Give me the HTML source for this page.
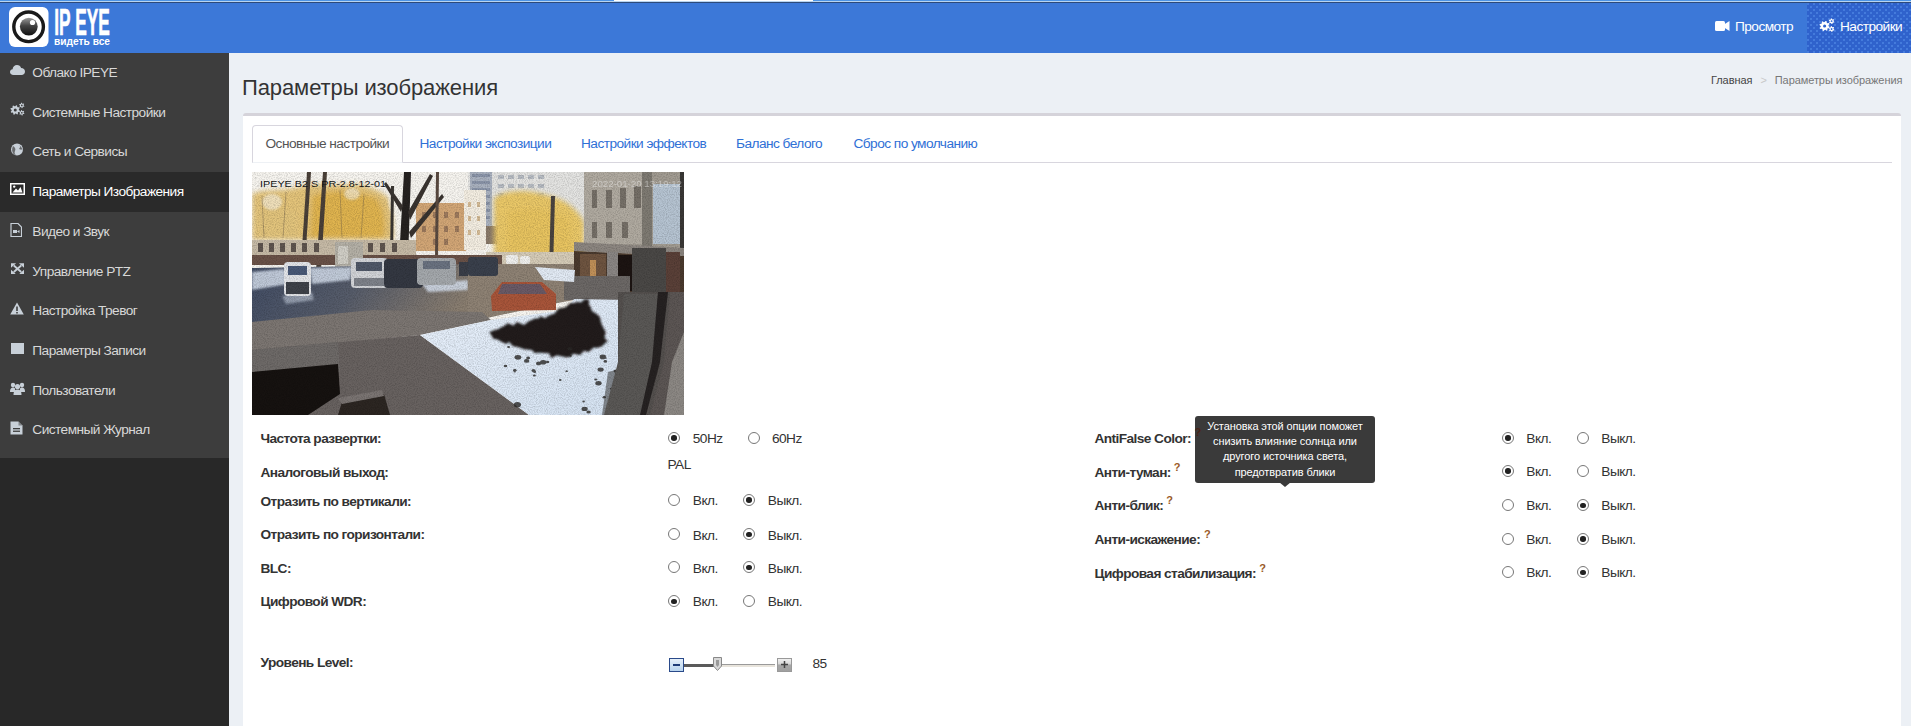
<!DOCTYPE html>
<html><head><meta charset="utf-8">
<style>
*{box-sizing:border-box;margin:0;padding:0}
html,body{width:1911px;height:726px;overflow:hidden}
body{position:relative;background:#ecf0f5;font-family:"Liberation Sans",sans-serif;font-size:13px;color:#333}
.abs{position:absolute}
#strip0{left:0;top:0;width:1911px;height:1px;background:#4d94e6}
#strip0w{left:614px;top:0;width:199px;height:1px;background:#fff}
#strip1{left:0;top:1px;width:1911px;height:1px;background:#b8d4f0}
#strip2{left:0;top:2px;width:1911px;height:1px;background:#2d4a7a}
#header{left:0;top:3px;width:1911px;height:50px;background:#3c78d8}
#navact{left:1807px;top:3px;width:104px;height:50px;background-color:#2f62cc;background-image:radial-gradient(circle at 1px 1px,rgba(100,160,245,0.4) 0.7px,transparent 1.1px),radial-gradient(circle at 4px 4px,rgba(100,160,245,0.4) 0.7px,transparent 1.1px);background-size:6px 6px}
.hnav{color:#fff;font-size:13.7px;letter-spacing:-0.55px;white-space:nowrap}
#sidebar{left:0;top:53px;width:229px;height:673px;background:#282828}
#menu{left:0;top:53px;width:229px;height:405px;background:#3d3d3d}
.mi{position:absolute;left:0;width:229px;height:39.7px}
.mi.act{background:#2a2a2a}
.mi .t{position:absolute;left:32.3px;top:10px;line-height:20px;color:#d8d8d8;font-size:13.7px;letter-spacing:-0.55px;white-space:nowrap}
.mi.act .t{color:#fff}
.mi svg{position:absolute;left:10px;top:11px}
#title{left:242px;top:74px;font-size:22px;line-height:28px;color:#333;white-space:nowrap;letter-spacing:-0.1px}
#bc{left:1711px;top:73px;font-size:11px;line-height:14px;white-space:nowrap;color:#777;letter-spacing:-0.07px}
#panel{left:243px;top:113px;width:1658px;height:613px;background:#fff;border-top:3px solid #d5d3da;border-radius:3px 3px 0 0}
#tabline{left:252px;top:162px;width:1640px;height:1px;background:#d8d6de}
#tab1{left:252px;top:125px;width:151px;height:38px;border:1px solid #d8d6de;border-bottom:1px solid #eef1f5;border-radius:4px 4px 0 0;background:#fff}
.tab{position:absolute;top:135px;line-height:18px;font-size:13.7px;color:#2f70d6;white-space:nowrap;letter-spacing:-0.55px}
.lbl{position:absolute;font-weight:bold;font-size:13.7px;color:#333;white-space:nowrap;letter-spacing:-0.58px;line-height:16px}
.txt{position:absolute;font-size:13.7px;color:#333;white-space:nowrap;letter-spacing:-0.55px;line-height:16px}
.rad{position:absolute;width:12px;height:12px;border-radius:50%;border:1px solid #777;background:#fff}
.rad.on::after{content:"";position:absolute;left:2.25px;top:2.25px;width:5.5px;height:5.5px;border-radius:50%;background:#222}
.q{position:absolute;font-size:11px;font-weight:bold;color:#9a5a28;line-height:11px}
#tip{left:1195px;top:416px;width:180px;height:67px;background:#3a3a3a;border-radius:3px;color:#fff;font-size:11px;line-height:15.2px;text-align:center;padding-top:3px;letter-spacing:-0.1px}
#tiparrow{left:1279px;top:482px;width:0;height:0;border-left:6px solid transparent;border-right:6px solid transparent;border-top:5px solid #3a3a3a}
</style></head><body>
<div class="abs" id="strip0"></div><div class="abs" id="strip0w"></div><div class="abs" id="strip1"></div><div class="abs" id="strip2"></div>
<div class="abs" id="header"></div>
<div class="abs" id="navact"></div>
<!-- logo -->
<svg class="abs" style="left:0;top:0" width="120" height="53" viewBox="0 0 120 53">
  <rect x="9" y="7" width="39.5" height="40" rx="6" fill="#fff"/>
  <circle cx="28.6" cy="26.8" r="14.8" fill="none" stroke="#1a1a1a" stroke-width="3.4"/>
  <defs><linearGradient id="pg" x1="0" y1="0" x2="0" y2="1"><stop offset="0" stop-color="#9a9a9a"/><stop offset="0.45" stop-color="#444"/><stop offset="1" stop-color="#111"/></linearGradient></defs>
  <circle cx="28.8" cy="26.6" r="8.9" fill="url(#pg)"/>
  <circle cx="32.5" cy="22.5" r="2.6" fill="#fff"/>
  <text x="54.3" y="35" font-family="Liberation Sans" font-weight="bold" font-size="37.8" fill="#fff" stroke="#fff" stroke-width="0.7" textLength="55.5" lengthAdjust="spacingAndGlyphs">IP EYE</text>
  <text x="54" y="44.8" font-family="Liberation Sans" font-weight="bold" font-size="11" fill="#fff" textLength="56" lengthAdjust="spacingAndGlyphs">видеть все</text>
</svg>
<!-- header nav -->
<svg class="abs" style="left:1715px;top:21px" width="15" height="10" viewBox="0 0 15 10"><rect x="0" y="0" width="10" height="10" rx="1.5" fill="#fff"/><path d="M9 3.5 L14.5 0 V10 L9 6.5Z" fill="#fff"/></svg>
<div class="abs hnav" style="left:1735px;top:18px;line-height:18px">Просмотр</div>
<svg class="abs" style="left:1819px;top:18px" width="16" height="14" viewBox="0 0 16 14"><path fill="#fff" fill-rule="evenodd" d="M9.50 8.00 L10.70 9.01 L10.40 9.99 L8.84 10.17 L8.36 10.76 L8.49 12.32 L7.59 12.80 L6.36 11.83 L5.60 11.90 L4.59 13.10 L3.61 12.80 L3.43 11.24 L2.84 10.76 L1.28 10.89 L0.80 9.99 L1.77 8.76 L1.70 8.00 L0.50 6.99 L0.80 6.01 L2.36 5.83 L2.84 5.24 L2.71 3.68 L3.61 3.20 L4.84 4.17 L5.60 4.10 L6.61 2.90 L7.59 3.20 L7.77 4.76 L8.36 5.24 L9.92 5.11 L10.40 6.01 L9.43 7.24Z M7.20 8.00 A1.6 1.6 0 1 0 4.00 8.00 A1.6 1.6 0 1 0 7.20 8.00Z M14.60 3.20 L15.40 3.95 L15.11 4.65 L14.01 4.61 L13.60 4.93 L13.35 6.00 L12.60 6.10 L12.08 5.13 L11.60 4.93 L10.55 5.25 L10.09 4.65 L10.67 3.72 L10.60 3.20 L9.80 2.45 L10.09 1.75 L11.19 1.79 L11.60 1.47 L11.85 0.40 L12.60 0.30 L13.12 1.27 L13.60 1.47 L14.65 1.15 L15.11 1.75 L14.53 2.68Z M13.50 3.20 A0.9 0.9 0 1 0 11.70 3.20 A0.9 0.9 0 1 0 13.50 3.20Z M14.60 11.00 L15.40 11.75 L15.11 12.45 L14.01 12.41 L13.60 12.73 L13.35 13.80 L12.60 13.90 L12.08 12.93 L11.60 12.73 L10.55 13.05 L10.09 12.45 L10.67 11.52 L10.60 11.00 L9.80 10.25 L10.09 9.55 L11.19 9.59 L11.60 9.27 L11.85 8.20 L12.60 8.10 L13.12 9.07 L13.60 9.27 L14.65 8.95 L15.11 9.55 L14.53 10.48Z M13.50 11.00 A0.9 0.9 0 1 0 11.70 11.00 A0.9 0.9 0 1 0 13.50 11.00Z"/></svg>
<div class="abs hnav" style="left:1840px;top:18px;line-height:18px">Настройки</div>

<div class="abs" id="sidebar"></div>
<div class="abs" id="menu"></div>
<div id="menuitems">
 <div class="mi" style="top:53px"><svg width="15" height="12" viewBox="0 0 15 12"><path d="M3.5 11 C1.3 11 0 9.6 0 8 C0 6.4 1.2 5.3 2.6 5.2 C2.8 2.8 4.6 1 7 1 C9 1 10.6 2.3 11.1 4.1 C13.3 4.1 15 5.6 15 7.6 C15 9.6 13.5 11 11.6 11Z" fill="#c8d0d8"/></svg><div class="t">Облако IPEYE</div></div>
 <div class="mi" style="top:92.7px"><svg width="15" height="14" viewBox="0 0 16 14" style="top:9px"><path fill="#c8d0d8" fill-rule="evenodd" d="M9.50 8.00 L10.70 9.01 L10.40 9.99 L8.84 10.17 L8.36 10.76 L8.49 12.32 L7.59 12.80 L6.36 11.83 L5.60 11.90 L4.59 13.10 L3.61 12.80 L3.43 11.24 L2.84 10.76 L1.28 10.89 L0.80 9.99 L1.77 8.76 L1.70 8.00 L0.50 6.99 L0.80 6.01 L2.36 5.83 L2.84 5.24 L2.71 3.68 L3.61 3.20 L4.84 4.17 L5.60 4.10 L6.61 2.90 L7.59 3.20 L7.77 4.76 L8.36 5.24 L9.92 5.11 L10.40 6.01 L9.43 7.24Z M7.20 8.00 A1.6 1.6 0 1 0 4.00 8.00 A1.6 1.6 0 1 0 7.20 8.00Z M14.60 3.20 L15.40 3.95 L15.11 4.65 L14.01 4.61 L13.60 4.93 L13.35 6.00 L12.60 6.10 L12.08 5.13 L11.60 4.93 L10.55 5.25 L10.09 4.65 L10.67 3.72 L10.60 3.20 L9.80 2.45 L10.09 1.75 L11.19 1.79 L11.60 1.47 L11.85 0.40 L12.60 0.30 L13.12 1.27 L13.60 1.47 L14.65 1.15 L15.11 1.75 L14.53 2.68Z M13.50 3.20 A0.9 0.9 0 1 0 11.70 3.20 A0.9 0.9 0 1 0 13.50 3.20Z M14.60 11.00 L15.40 11.75 L15.11 12.45 L14.01 12.41 L13.60 12.73 L13.35 13.80 L12.60 13.90 L12.08 12.93 L11.60 12.73 L10.55 13.05 L10.09 12.45 L10.67 11.52 L10.60 11.00 L9.80 10.25 L10.09 9.55 L11.19 9.59 L11.60 9.27 L11.85 8.20 L12.60 8.10 L13.12 9.07 L13.60 9.27 L14.65 8.95 L15.11 9.55 L14.53 10.48Z M13.50 11.00 A0.9 0.9 0 1 0 11.70 11.00 A0.9 0.9 0 1 0 13.50 11.00Z"/></svg><div class="t">Системные Настройки</div></div>
 <div class="mi" style="top:132.4px"><svg width="14" height="14" viewBox="0 0 14 14"><circle cx="7" cy="6.5" r="6" fill="#c8d0d8"/><path d="M3 3 C5 4 6 6 5 8 C4 10 5 11 6 12.5 L3.5 11 C2 9 1.5 6 3 3Z M9 2 C10 3 11 4 9.5 5 C8.5 5.5 10 7 11.5 6.5 L12.5 7 C12 5 11 3 9 2Z" fill="#3d3d3d" opacity="0.7"/></svg><div class="t">Сеть и Сервисы</div></div>
 <div class="mi act" style="top:172.1px"><svg width="15" height="12" viewBox="0 0 15 12"><rect x="0.75" y="0.75" width="13.5" height="10.5" fill="none" stroke="#fff" stroke-width="1.5"/><path d="M2.5 9.5 L6 5.5 L8 7.5 L10.5 4 L12.5 9.5Z" fill="#fff"/><circle cx="4.2" cy="3.6" r="1.2" fill="#fff"/></svg><div class="t">Параметры Изображения</div></div>
 <div class="mi" style="top:211.8px"><svg width="12" height="14" viewBox="0 0 12 14"><path d="M1 0.5 H8 L11.5 4 V13.5 H1Z" fill="none" stroke="#c8d0d8" stroke-width="1.2"/><rect x="3" y="7" width="4" height="3" fill="#c8d0d8"/><path d="M7 8.5 L9.5 7 V10 Z" fill="#c8d0d8"/></svg><div class="t">Видео и Звук</div></div>
 <div class="mi" style="top:251.5px"><svg width="13" height="11.5" viewBox="0 0 14 12" style="left:11px;top:11.3px"><g stroke="#c8d0d8" stroke-width="2" fill="none"><path d="M3 2.5 L11 9.5 M11 2.5 L3 9.5"/></g><g fill="#c8d0d8"><path d="M0 0 H5.5 L0 4.8Z M14 0 H8.5 L14 4.8Z M0 12 H5.5 L0 7.2Z M14 12 H8.5 L14 7.2Z"/></g></svg><div class="t">Управление PTZ</div></div>
 <div class="mi" style="top:291.2px"><svg width="14" height="13" viewBox="0 0 14 13"><path d="M7 0.5 L13.8 12.5 H0.2Z" fill="#c8d0d8"/><rect x="6.2" y="4.5" width="1.6" height="4.5" fill="#3d3d3d"/><rect x="6.2" y="10" width="1.6" height="1.5" fill="#3d3d3d"/></svg><div class="t">Настройка Тревог</div></div>
 <div class="mi" style="top:330.9px"><svg width="13" height="11" viewBox="0 0 13 11" style="left:11px;top:12.1px"><rect x="0" y="0" width="13" height="11" fill="#c8d0d8"/></svg><div class="t">Параметры Записи</div></div>
 <div class="mi" style="top:370.6px"><svg width="15" height="13" viewBox="0 0 15 13"><g fill="#c8d0d8"><circle cx="3" cy="3" r="2.2"/><circle cx="12" cy="3" r="2.2"/><circle cx="7.5" cy="4.5" r="2.6"/><path d="M0 10 C0 6.5 1.5 5.5 3 5.5 C4.5 5.5 5 6 5 7 V10Z"/><path d="M15 10 C15 6.5 13.5 5.5 12 5.5 C10.5 5.5 10 6 10 7 V10Z"/><path d="M3.5 13 C3.5 8.5 5.5 7.5 7.5 7.5 C9.5 7.5 11.5 8.5 11.5 13Z"/></g></svg><div class="t">Пользователи</div></div>
 <div class="mi" style="top:410.3px"><svg width="13" height="14" viewBox="0 0 13 14"><path d="M0.5 0.5 H8.5 L12.5 4.5 V13.5 H0.5Z" fill="#c8d0d8"/><path d="M8.5 0.5 V4.5 H12.5Z" fill="#3d3d3d" opacity="0.5"/><rect x="3" y="7" width="7" height="1.3" fill="#3d3d3d"/><rect x="3" y="9.6" width="7" height="1.3" fill="#3d3d3d"/></svg><div class="t">Системный Журнал</div></div>
</div>

<div class="abs" id="title">Параметры изображения</div>
<div class="abs" id="bc"><span style="color:#444">Главная</span><span style="color:#c8c8c8;margin:0 8px 0 8px">&gt;</span><span>Параметры изображения</span></div>

<div class="abs" id="panel"></div>
<div class="abs" id="tabline"></div>
<div class="abs" id="tab1"></div>
<div class="tab" style="left:265.5px;color:#555">Основные настройки</div>
<div class="tab" style="left:419.5px">Настройки экспозиции</div>
<div class="tab" style="left:581px">Настройки эффектов</div>
<div class="tab" style="left:736px">Баланс белого</div>
<div class="tab" style="left:853.5px">Сброс по умолчанию</div>

<!-- CAMERA -->
<div class="abs" id="cam" style="left:252px;top:172px;width:432px;height:243px;background:#777;overflow:hidden">
<svg width="432" height="243" viewBox="0 0 432 243" style="display:block">
<defs>
 <filter id="bl"><feGaussianBlur stdDeviation="1.2"/></filter>
 <filter id="bl2"><feGaussianBlur stdDeviation="2.5"/></filter>
 <linearGradient id="snow" x1="0" y1="0" x2="1" y2="1"><stop offset="0" stop-color="#e8f0fa"/><stop offset="1" stop-color="#d4e2f2"/></linearGradient>
 <linearGradient id="gnd" x1="0" y1="0" x2="1" y2="0.3"><stop offset="0" stop-color="#414c64"/><stop offset="0.5" stop-color="#565c6a"/><stop offset="1" stop-color="#8a7e70"/></linearGradient>
</defs>
<rect width="432" height="243" fill="#f7f5f0"/>
<!-- TR background tall buildings -->
<rect x="216" y="0" width="118" height="60" fill="#e4e4e2"/>
<rect x="218" y="0" width="22" height="60" fill="#aab2c0"/>
<g fill="#7e8aa0" opacity="0.7"><rect x="220" y="2" width="18" height="3"/><rect x="220" y="9" width="18" height="3"/><rect x="220" y="16" width="18" height="3"/><rect x="220" y="23" width="18" height="3"/><rect x="220" y="30" width="18" height="3"/><rect x="220" y="37" width="18" height="3"/><rect x="220" y="44" width="18" height="3"/></g>
<g fill="#9aa2b0" opacity="0.6"><rect x="246" y="3" width="6" height="4"/><rect x="256" y="3" width="6" height="4"/><rect x="266" y="3" width="6" height="4"/><rect x="276" y="3" width="6" height="4"/><rect x="286" y="3" width="6" height="4"/><rect x="246" y="12" width="6" height="4"/><rect x="256" y="12" width="6" height="4"/><rect x="266" y="12" width="6" height="4"/><rect x="276" y="12" width="6" height="4"/><rect x="286" y="12" width="6" height="4"/><rect x="246" y="21" width="6" height="4"/><rect x="266" y="21" width="6" height="4"/><rect x="286" y="21" width="6" height="4"/></g>
<!-- tan building -->
<rect x="164" y="31" width="50" height="48" fill="#d2a676"/>
<g fill="#8a6a54" opacity="0.75"><rect x="170" y="40" width="4" height="6"/><rect x="181" y="40" width="4" height="6"/><rect x="192" y="40" width="4" height="6"/><rect x="203" y="40" width="4" height="6"/><rect x="170" y="54" width="4" height="6"/><rect x="181" y="54" width="4" height="6"/><rect x="192" y="54" width="4" height="6"/><rect x="203" y="54" width="4" height="6"/><rect x="181" y="67" width="4" height="6"/><rect x="192" y="67" width="4" height="6"/></g>
<rect x="212" y="18" width="22" height="60" fill="#f4eee2"/>
<g fill="#c8a878" opacity="0.7"><rect x="216" y="30" width="3" height="5"/><rect x="225" y="30" width="3" height="5"/><rect x="216" y="44" width="3" height="5"/><rect x="225" y="44" width="3" height="5"/><rect x="216" y="58" width="3" height="5"/><rect x="225" y="58" width="3" height="5"/></g>
<rect x="234" y="54" width="12" height="18" fill="#8a7a6a"/>
<!-- yellow trees -->
<g filter="url(#bl2)">
 <path d="M0 22 C12 16 30 20 46 15 C64 10 84 14 104 12 C120 14 132 20 140 30 L142 68 L0 68Z" fill="#e4c47a"/>
 <path d="M60 24 C80 16 104 18 124 26 C132 34 134 50 132 66 L58 66Z" fill="#e0b450"/>
 <path d="M4 40 C14 34 30 36 46 40 L46 66 L4 66Z" fill="#e2c47c"/>
 <path d="M242 26 C256 16 280 18 298 24 C314 28 326 38 332 50 L332 84 L242 84Z" fill="#eac868"/>
 <path d="M256 40 C274 34 298 36 318 48 L320 82 L256 82Z" fill="#e8c460"/>
</g>
<g fill="#f8f6f0" opacity="0.55" filter="url(#bl)"><ellipse cx="20" cy="30" rx="10" ry="8"/><ellipse cx="100" cy="22" rx="8" ry="6"/><ellipse cx="148" cy="30" rx="12" ry="14"/></g>
<g stroke="#6a5a48" stroke-width="0.8" opacity="0.5"><path d="M10 24 L12 66 M34 20 L31 66 M88 18 L90 66 M112 22 L109 66"/></g>
<!-- trunks & branches -->
<path d="M55 0 L59 0 L53 92 L49 92Z" fill="#4a4038"/>
<path d="M71 0 L75 0 L69 98 L64 98Z" fill="#4a4038"/>
<path d="M152 0 L159 0 L156 88 L147 88Z" fill="#262220"/>
<path d="M156 40 L178 2 L181 4 L158 48Z M157 60 L190 22 L192 25 L159 66Z M149 40 L132 12 L134 10 L151 34Z" fill="#3a3430"/>
<path d="M139 14 L142 14 L141 88 L138 88Z" fill="#3a3632"/>
<path d="M184 0 L187 0 L186 88 L183 88Z" fill="#5a4a40"/>
<path d="M299 24 L303 24 L301 98 L297 98Z" fill="#4a4440"/>
<rect x="234" y="80" width="90" height="14" fill="#d6ccb8"/>
<g fill="#f0f0ee"><rect x="254" y="83" width="12" height="9" rx="2"/><rect x="268" y="84" width="10" height="8" rx="2"/></g>
<!-- low building band -->
<rect x="0" y="68" width="164" height="16" fill="#c6baa6"/>
<g fill="#4e4440" opacity="0.85"><rect x="6" y="71" width="5" height="9"/><rect x="17" y="71" width="5" height="9"/><rect x="28" y="71" width="5" height="9"/><rect x="39" y="71" width="5" height="9"/><rect x="50" y="71" width="5" height="9"/><rect x="62" y="71" width="5" height="9"/><rect x="116" y="71" width="5" height="9"/><rect x="128" y="71" width="5" height="9"/><rect x="140" y="71" width="5" height="9"/></g>
<rect x="0" y="83" width="250" height="10" fill="#6a5248"/>
<rect x="83" y="70" width="28" height="26" fill="#b4b0a6"/>
<rect x="86" y="74" width="10" height="18" fill="#d0cec6"/>
<!-- right building facade -->
<rect x="332" y="0" width="100" height="76" fill="#a29c92"/>
<rect x="332" y="0" width="68" height="72" fill="#b0aaa0"/>
<g fill="#767068"><rect x="340" y="18" width="5" height="18"/><rect x="354" y="18" width="6" height="18"/><rect x="368" y="16" width="6" height="20"/><rect x="382" y="14" width="7" height="22"/><rect x="340" y="50" width="5" height="16"/><rect x="354" y="50" width="6" height="16"/><rect x="370" y="50" width="6" height="16"/></g>
<rect x="390" y="0" width="10" height="76" fill="#7e7a72"/>
<rect x="401" y="12" width="27" height="60" fill="#b6c4d2"/>
<rect x="428" y="0" width="4" height="80" fill="#3a3836"/>
<!-- canopy & shop -->
<path d="M322 70 L432 76 L432 84 L322 79Z" fill="#8c8680"/>
<path d="M322 79 L432 84 L432 122 L322 122Z" fill="#4a3a2e"/>
<rect x="328" y="82" width="26" height="36" fill="#6e5440"/>
<rect x="338" y="88" width="6" height="16" fill="#c09058"/>
<rect x="355" y="80" width="11" height="42" fill="#8a8684"/>
<rect x="366" y="83" width="18" height="36" fill="#1c1412"/>
<rect x="380" y="76" width="34" height="46" fill="#4a4846"/>
<rect x="414" y="80" width="14" height="42" fill="#5a4038"/>
<!-- ground left (bluish icy) -->
<path d="M0 96 L224 92 L216 150 L168 152 L120 160 L0 176Z" fill="url(#gnd)"/>
<g fill="#d4deec" opacity="0.85" filter="url(#bl)"><path d="M0 100 L32 97 L36 112 L0 118Z"/><path d="M58 96 L100 95 L98 108 L60 112Z"/><path d="M30 124 L60 120 L62 128 L34 132Z" opacity="0.6"/><path d="M170 112 L216 108 L216 118 L176 120Z"/></g>
<!-- ground right (warm) -->
<path d="M216 92 L322 92 L322 128 L300 132 L216 150Z" fill="#8e8274"/>
<path d="M312 104 L378 104 L378 128 L312 128Z" fill="#6c6866"/>
<path d="M283 95 L323 98 L322 110 L292 108Z" fill="#e2eaf4"/>
<!-- cars -->
<rect x="32" y="90" width="27" height="34" rx="4" fill="#e2e4e8"/><rect x="36" y="94" width="19" height="9" fill="#4a5a78"/><rect x="34" y="110" width="23" height="12" fill="#3e424a"/>
<rect x="99" y="86" width="37" height="30" rx="4" fill="#d2d4d8"/><rect x="104" y="90" width="26" height="9" fill="#505868"/><rect x="102" y="106" width="30" height="8" fill="#7e828a"/>
<rect x="132" y="87" width="39" height="29" rx="4" fill="#343842"/>
<rect x="165" y="86" width="39" height="27" rx="4" fill="#a4a8ac"/><rect x="171" y="89" width="27" height="8" fill="#6a7280"/>
<rect x="207" y="90" width="9" height="14" fill="#3a3e48"/>
<rect x="216" y="85" width="30" height="19" rx="3" fill="#3a404c"/>
<!-- red car -->
<path d="M239 124 L250 110 L290 110 L304 122 L304 138 L240 139Z" fill="#a8553a"/>
<path d="M250 112 L288 112 L295 122 L246 122Z" fill="#6a5a66"/>
<!-- mid gray band BL -->
<path d="M0 150 L120 138 L230 140 L239 148 L168 163 L0 180Z" fill="#7c7672"/>
<!-- pavement -->
<path d="M0 178 L168 163 L277 243 L0 243Z" fill="#686260"/>
<!-- snow -->
<path d="M168 163 L239 148 L314 138 L322 127 L377 128 L378 150 L372 167 L390 197 L367 243 L277 243Z" fill="url(#snow)"/>
<!-- bush -->
<g filter="url(#bl)"><path d="M237.1 160.3 L242.8 157.9 L246.2 157.3 L247.8 156.0 L251.7 154.3 L255.8 151.3 L261.6 153.6 L264.8 149.9 L272.0 152.9 L276.4 149.5 L283.0 146.4 L287.1 146.3 L288.2 144.1 L293.0 146.2 L296.4 143.7 L302.7 141.4 L305.6 137.8 L306.5 136.5 L312.9 135.6 L314.4 134.4 L318.4 131.0 L323.5 131.0 L324.1 129.7 L328.8 130.5 L333.1 126.9 L337.1 128.1 L336.9 133.3 L338.3 133.9 L339.7 138.8 L345.3 142.4 L347.9 145.1 L349.0 150.5 L350.4 153.8 L353.7 160.2 L353.2 162.2 L352.5 165.7 L356.7 170.5 L354.9 169.6 L350.1 174.2 L345.6 175.8 L341.7 175.4 L336.5 180.0 L332.1 178.7 L328.1 182.9 L321.2 181.7 L318.2 184.9 L313.6 185.2 L304.9 183.2 L299.3 185.9 L297.0 181.3 L287.7 180.7 L282.7 180.9 L279.8 178.1 L272.2 177.3 L269.3 176.3 L267.6 175.6 L260.7 173.9 L256.9 169.8 L254.7 172.1 L251.2 170.8 L245.5 167.5 L241.4 166.7 L238.5 161.8Z" fill="#231f1e"/></g><g fill="#2a2826" opacity="0.8"><ellipse cx="276.1" cy="186.0" rx="2.0" ry="1.4"/><ellipse cx="256.6" cy="175.0" rx="1.5" ry="1.1"/><ellipse cx="262.7" cy="199.7" rx="1.2" ry="0.8"/><ellipse cx="359.3" cy="216.8" rx="1.5" ry="1.1"/><ellipse cx="281.5" cy="198.6" rx="2.0" ry="1.5"/><ellipse cx="265.4" cy="232.7" rx="3.6" ry="2.6"/><ellipse cx="308.2" cy="207.9" rx="1.3" ry="1.0"/><ellipse cx="262.8" cy="198.3" rx="1.8" ry="1.3"/><ellipse cx="353.6" cy="186.0" rx="1.2" ry="0.8"/><ellipse cx="368.9" cy="210.9" rx="1.5" ry="1.1"/><ellipse cx="317.9" cy="176.8" rx="2.5" ry="1.8"/><ellipse cx="372.3" cy="233.7" rx="2.9" ry="2.1"/><ellipse cx="282.6" cy="199.9" rx="1.5" ry="1.1"/><ellipse cx="346.5" cy="211.2" rx="3.1" ry="2.2"/><ellipse cx="291.2" cy="190.2" rx="3.2" ry="2.3"/><ellipse cx="373.1" cy="233.0" rx="3.2" ry="2.3"/><ellipse cx="352.3" cy="225.3" rx="1.7" ry="1.2"/><ellipse cx="314.7" cy="199.2" rx="1.2" ry="0.9"/><ellipse cx="253.5" cy="194.0" rx="1.8" ry="1.3"/><ellipse cx="336.6" cy="240.0" rx="2.2" ry="1.6"/><ellipse cx="367.1" cy="242.2" rx="3.5" ry="2.5"/><ellipse cx="295.6" cy="190.0" rx="1.7" ry="1.2"/><ellipse cx="274.6" cy="188.9" rx="2.7" ry="1.9"/><ellipse cx="362.5" cy="232.1" rx="2.3" ry="1.7"/><ellipse cx="331.6" cy="229.4" rx="1.3" ry="1.0"/><ellipse cx="332.6" cy="236.9" rx="3.1" ry="2.2"/><ellipse cx="343.8" cy="207.5" rx="1.6" ry="1.1"/><ellipse cx="348.6" cy="197.6" rx="3.1" ry="2.2"/><ellipse cx="371.5" cy="201.9" rx="2.1" ry="1.5"/><ellipse cx="368.3" cy="224.3" rx="1.5" ry="1.1"/><ellipse cx="265.9" cy="185.3" rx="3.4" ry="2.4"/><ellipse cx="350.8" cy="184.9" rx="3.2" ry="2.3"/><ellipse cx="372.5" cy="219.7" rx="2.0" ry="1.4"/><ellipse cx="318.6" cy="183.9" rx="1.2" ry="0.8"/><ellipse cx="371.4" cy="219.2" rx="2.4" ry="1.7"/><ellipse cx="366.7" cy="204.5" rx="3.3" ry="2.4"/><ellipse cx="353.3" cy="189.4" rx="1.8" ry="1.3"/><ellipse cx="286.6" cy="191.4" rx="2.6" ry="1.9"/><ellipse cx="282.4" cy="203.5" rx="1.5" ry="1.0"/><ellipse cx="363.8" cy="199.1" rx="2.3" ry="1.6"/></g>
<path d="M356 200 L372 196 L376 243 L350 243Z" fill="#2a2826" opacity="0.5"/>
<!-- right dark wall -->
<rect x="366" y="120" width="66" height="123" fill="#54504e"/>
<path d="M372 122 L406 122 L404 200 L392 243 L352 243 L366 190Z" fill="#5a5856"/>
<path d="M406 120 L416 120 L408 190 L394 243 L388 243 L400 190Z" fill="#262222"/>
<path d="M418 120 L432 120 L432 243 L398 243 L412 190Z" fill="#5c5654"/>
<path d="M420 190 L432 160 L432 243 L412 243Z" fill="#8c8884"/>
<!-- dark block bottom-left -->
<path d="M0 178 L86 170 L88 200 L0 210Z" fill="#6e6a68"/>
<path d="M0 200 L86 192 L88 222 L56 243 L0 243Z" fill="#161210"/>
<path d="M90 230 L132 222 L138 243 L86 243Z" fill="#2c2622"/>
<path d="M86 226 L130 218 L132 224 L90 232Z" fill="#7a7472"/>
<filter id="noise" x="0" y="0" width="100%" height="100%"><feTurbulence type="fractalNoise" baseFrequency="0.9" numOctaves="2" seed="3"/><feColorMatrix type="matrix" values="0 0 0 0 0  0 0 0 0 0  0 0 0 0 0  0 0 0 -1.6 1.0"/></filter>
<rect x="0" y="0" width="432" height="243" filter="url(#noise)" opacity="0.22"/>
<!-- OSD -->
<text x="8" y="14.5" font-family="Liberation Sans" font-size="8.5" fill="#111" textLength="126" lengthAdjust="spacingAndGlyphs">IPEYE  B2 S  PR-2.8-12-01</text>
<text x="340" y="14.5" font-family="Liberation Sans" font-size="8.5" fill="#f4f4f4" opacity="0.45" textLength="90" lengthAdjust="spacingAndGlyphs">2022-01-20 13:19:12</text>
</svg>

</div>

<!-- FORM LEFT -->
<div class="lbl" style="left:260.5px;top:431.2px">Частота развертки:</div>
<div class="rad on" style="left:668px;top:431.8px"></div>
<div class="txt" style="left:692.8px;top:430.5px">50Hz</div>
<div class="rad" style="left:748px;top:431.8px"></div>
<div class="txt" style="left:772px;top:430.5px">60Hz</div>
<div class="lbl" style="left:260.5px;top:465.0px">Аналоговый выход:</div>
<div class="lbl" style="left:260.5px;top:493.8px">Отразить по вертикали:</div>
<div class="rad" style="left:668px;top:494.1px"></div>
<div class="txt" style="left:692.8px;top:493.0px">Вкл.</div>
<div class="rad on" style="left:743px;top:494.1px"></div>
<div class="txt" style="left:767.8px;top:493.0px">Выкл.</div>
<div class="lbl" style="left:260.5px;top:526.9px">Отразить по горизонтали:</div>
<div class="rad" style="left:668px;top:528.4px"></div>
<div class="txt" style="left:692.8px;top:527.5px">Вкл.</div>
<div class="rad on" style="left:743px;top:528.4px"></div>
<div class="txt" style="left:767.8px;top:527.5px">Выкл.</div>
<div class="lbl" style="left:260.5px;top:560.7px">BLC:</div>
<div class="rad" style="left:668px;top:561.4px"></div>
<div class="txt" style="left:692.8px;top:560.5px">Вкл.</div>
<div class="rad on" style="left:743px;top:561.4px"></div>
<div class="txt" style="left:767.8px;top:560.5px">Выкл.</div>
<div class="lbl" style="left:260.5px;top:593.8px">Цифровой WDR:</div>
<div class="rad on" style="left:668px;top:595.4px"></div>
<div class="txt" style="left:692.8px;top:594.3px">Вкл.</div>
<div class="rad" style="left:743px;top:595.4px"></div>
<div class="txt" style="left:767.8px;top:594.3px">Выкл.</div>
<div class="lbl" style="left:260.5px;top:654.8px">Уровень Level:</div>
<div class="txt" style="left:667.5px;top:457.1px">PAL</div>
<div class="lbl" style="left:1094.5px;top:431.2px">AntiFalse Color:</div>
<div class="rad on" style="left:1502px;top:431.8px"></div>
<div class="txt" style="left:1526.3px;top:430.5px">Вкл.</div>
<div class="rad" style="left:1577px;top:431.8px"></div>
<div class="txt" style="left:1601.3px;top:430.5px">Выкл.</div>
<div class="lbl" style="left:1094.5px;top:465.1px">Анти-туман:</div>
<div class="rad on" style="left:1502px;top:465.2px"></div>
<div class="txt" style="left:1526.3px;top:464.0px">Вкл.</div>
<div class="rad" style="left:1577px;top:465.2px"></div>
<div class="txt" style="left:1601.3px;top:464.0px">Выкл.</div>
<div class="q" style="left:1173.8px;top:461.5px">?</div>
<div class="lbl" style="left:1094.5px;top:498.0px">Анти-блик:</div>
<div class="rad" style="left:1502px;top:499.3px"></div>
<div class="txt" style="left:1526.3px;top:497.5px">Вкл.</div>
<div class="rad on" style="left:1577px;top:499.3px"></div>
<div class="txt" style="left:1601.3px;top:497.5px">Выкл.</div>
<div class="q" style="left:1166.2px;top:495.1px">?</div>
<div class="lbl" style="left:1094.5px;top:532.1px">Анти-искажение:</div>
<div class="rad" style="left:1502px;top:532.9px"></div>
<div class="txt" style="left:1526.3px;top:531.5px">Вкл.</div>
<div class="rad on" style="left:1577px;top:532.9px"></div>
<div class="txt" style="left:1601.3px;top:531.5px">Выкл.</div>
<div class="q" style="left:1204.0px;top:528.8px">?</div>
<div class="lbl" style="left:1094.5px;top:565.8px">Цифровая стабилизация:</div>
<div class="rad" style="left:1502px;top:566.4px"></div>
<div class="txt" style="left:1526.3px;top:565.2px">Вкл.</div>
<div class="rad on" style="left:1577px;top:566.4px"></div>
<div class="txt" style="left:1601.3px;top:565.2px">Выкл.</div>
<div class="q" style="left:1259.2px;top:563.3px">?</div>
<div class="abs" style="left:669px;top:658px;width:15px;height:14px;border:1px solid #2a4a8a;background:linear-gradient(#e6f0fa,#b8d4ee)"></div>
<div class="abs" style="left:673px;top:664px;width:7px;height:2px;background:#1e3c78"></div>
<div class="abs" style="left:684px;top:664px;width:30px;height:3px;background:#5a5a5a"></div>
<div class="abs" style="left:721px;top:664px;width:54px;height:1px;background:#9a9a9a"></div>
<div class="abs" style="left:721px;top:665px;width:54px;height:2px;background:#e8e4dc"></div>
<svg class="abs" style="left:713px;top:657px" width="9" height="14" viewBox="0 0 9 14"><path d="M0.5 0.5 H8.5 V9 L4.5 13.5 L0.5 9Z" fill="#d8d8d8" stroke="#888" stroke-width="1"/><path d="M3 3 V8 L4.5 10 L6 8 V3Z" fill="#999"/></svg>
<div class="abs" style="left:777px;top:658px;width:15px;height:14px;background:linear-gradient(#f0f0f0 0,#d8d8d8 40%,#a8a8a8 50%,#a0a0a0 100%);border:1px solid #999"></div>
<svg class="abs" style="left:777px;top:658px" width="15" height="14" viewBox="0 0 15 14"><path d="M4 6.5 H11 M7.5 3 V10" stroke="#444" stroke-width="1.5"/></svg>
<div class="txt" style="left:812.5px;top:656.2px">85</div>
<div class="abs" id="tip">Установка этой опции поможет<br>снизить влияние солнца или<br>другого источника света,<br>предотвратив блики</div>
<div class="abs" id="tiparrow"></div>
<div class="q" style="left:1194.5px;top:427px;color:#4a2418">?</div>

</body></html>
